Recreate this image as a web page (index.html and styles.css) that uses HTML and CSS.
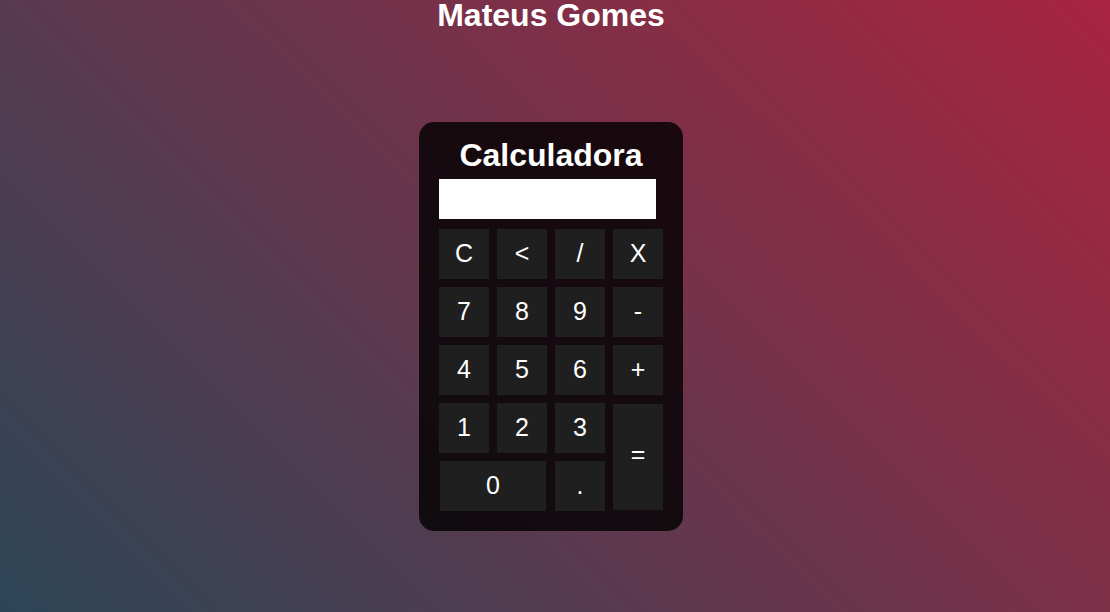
FILE: index.html
```html
<!DOCTYPE html>
<html lang="pt-BR">
<head>
<meta charset="utf-8">
<title>Calculadora</title>
<link rel="stylesheet" href="styles.css">
</head>
<body>
<header class="author"><h1 class="title">Mateus Gomes</h1></header>
<main class="stage">
<section class="calculator">
<h1 class="title">Calculadora</h1>
<input class="display" type="text" aria-label="Resultado" readonly>
<div class="keys">
<button class="key">C</button><button class="key">&lt;</button><button class="key">/</button><button class="key">X</button>
<button class="key">7</button><button class="key">8</button><button class="key">9</button><button class="key">-</button>
<button class="key">4</button><button class="key">5</button><button class="key">6</button><button class="key">+</button>
<button class="key">1</button><button class="key">2</button><button class="key">3</button><button class="key key-equals">=</button>
<button class="key key-zero">0</button><button class="key">.</button>
</div>
</section>
</main>
</body>
</html>
```
FILE: styles.css
```css
* {
  box-sizing: border-box;
  margin: 0;
  padding: 0;
}

body {
  min-height: 100vh;
  font-family: "Liberation Sans", Arial, sans-serif;
  color: #fff;
  background: linear-gradient(45deg, #2c4657, #a82440);
}

.author {
  padding-right: 8px;
}

.title {
  font-size: 32px;
  line-height: 30px;
  text-align: center;
}

.stage {
  display: flex;
  justify-content: center;
  padding: 92px 8px 0 0;
}

.calculator {
  padding: 18px 20px 20px;
  border-radius: 15px;
  background: rgba(0, 0, 0, 0.8);
}

.display {
  display: block;
  width: 217px;
  height: 40px;
  margin: 9px 0 10px;
  padding: 0 8px;
  border: 0;
  font: 25px "Liberation Sans", Arial, sans-serif;
  background: #fff;
}

.keys {
  display: grid;
  grid-template-columns: repeat(4, 50px);
  grid-auto-rows: 50px;
  gap: 8px;
}

.key {
  padding-bottom: 2px;
  border: 0;
  font: 25px "Liberation Sans", Arial, sans-serif;
  color: #fff;
  background: #1f1f1f;
  cursor: pointer;
}

.key-equals {
  grid-row: span 2;
  margin: 1px 0;
  padding-bottom: 6px;
}

.key-zero {
  grid-column: span 2;
  margin: 0 1px;
}
```
